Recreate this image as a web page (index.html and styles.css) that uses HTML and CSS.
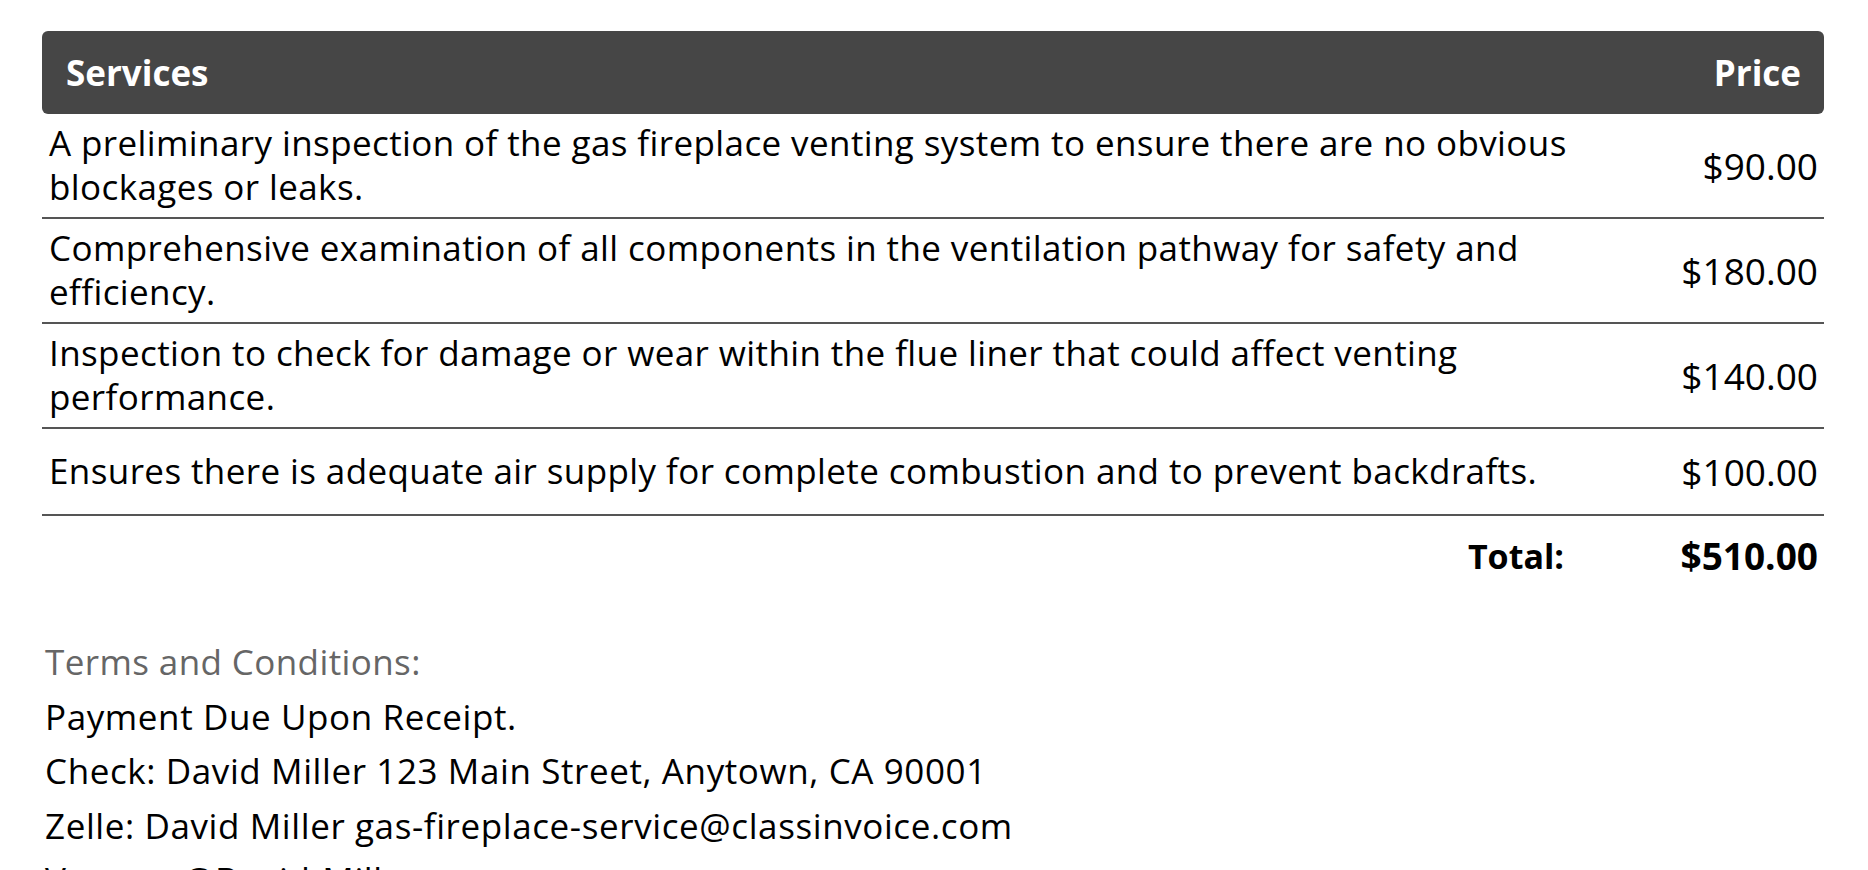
FILE: index.html
```html
<!DOCTYPE html>
<html lang="en">
<head>
<meta charset="utf-8">
<title>Invoice services</title>
<link rel="stylesheet" href="styles.css">
</head>
<body>
<main class="invoice">
  <section class="services">
    <div class="services-head">
      <span>Services</span>
      <span>Price</span>
    </div>
    <div class="service-row">
      <div class="desc">A preliminary inspection of the gas fireplace venting system to ensure there are no obvious blockages or leaks.</div>
      <div class="price">$90.00</div>
    </div>
    <div class="service-row">
      <div class="desc">Comprehensive examination of all components in the ventilation pathway for safety and efficiency.</div>
      <div class="price">$180.00</div>
    </div>
    <div class="service-row">
      <div class="desc">Inspection to check for damage or wear within the flue liner that could affect venting performance.</div>
      <div class="price">$140.00</div>
    </div>
    <div class="service-row">
      <div class="desc">Ensures there is adequate air supply for complete combustion and to prevent backdrafts.</div>
      <div class="price">$100.00</div>
    </div>
    <div class="total-row">
      <div class="total-label">Total:</div>
      <div class="total-value">$510.00</div>
    </div>
  </section>
  <section class="terms">
    <div class="terms-title">Terms and Conditions:</div>
    <div class="terms-line">Payment Due Upon Receipt.</div>
    <div class="terms-line">Check: David Miller 123 Main Street, Anytown, CA 90001</div>
    <div class="terms-line">Zelle: David Miller gas-fireplace-service@classinvoice.com</div>
    <div class="terms-line">Venmo: @David-Miller</div>
  </section>
</main>
</body>
</html>
```

FILE: styles.css
```css
html, body {
  margin: 0;
  padding: 0;
  background: #ffffff;
}

body {
  font-family: "Open Sans", "Liberation Sans", sans-serif;
  color: #000;
}

.invoice {
  padding: 31px 44px 0 42px;
}

.services-head {
  display: flex;
  justify-content: space-between;
  align-items: center;
  height: 83px;
  padding: 0 23px 0 24px;
  background: #464646;
  border-radius: 6px;
  color: #fff;
  font-size: 35px;
  font-weight: 700;
}

.service-row {
  display: grid;
  grid-template-columns: 1fr 223px;
  align-items: center;
  min-height: 87px;
  box-sizing: border-box;
  padding: 7px 6px 8px 7px;
  border-bottom: 2px solid #555;
}

.desc {
  font-size: 35px;
  line-height: 44px;
  font-weight: 500;
  letter-spacing: 0.4px;
}

.price {
  text-align: right;
  font-size: 37px;
  font-weight: 500;
}

.total-row {
  display: grid;
  grid-template-columns: 1fr 223px;
  align-items: center;
  padding: 14px 6px 0 7px;
  font-weight: 700;
}

.total-label {
  text-align: right;
  padding-right: 31px;
  font-size: 34px;
}

.total-value {
  text-align: right;
  font-size: 37px;
}

.terms {
  padding: 54px 0 0 3px;
}

.terms-title {
  color: #666;
  font-size: 35px;
  line-height: 54.5px;
  font-weight: 500;
  letter-spacing: 0.4px;
}

.terms-line {
  font-size: 35px;
  line-height: 54.5px;
  font-weight: 500;
  letter-spacing: 0.6px;
}
```
